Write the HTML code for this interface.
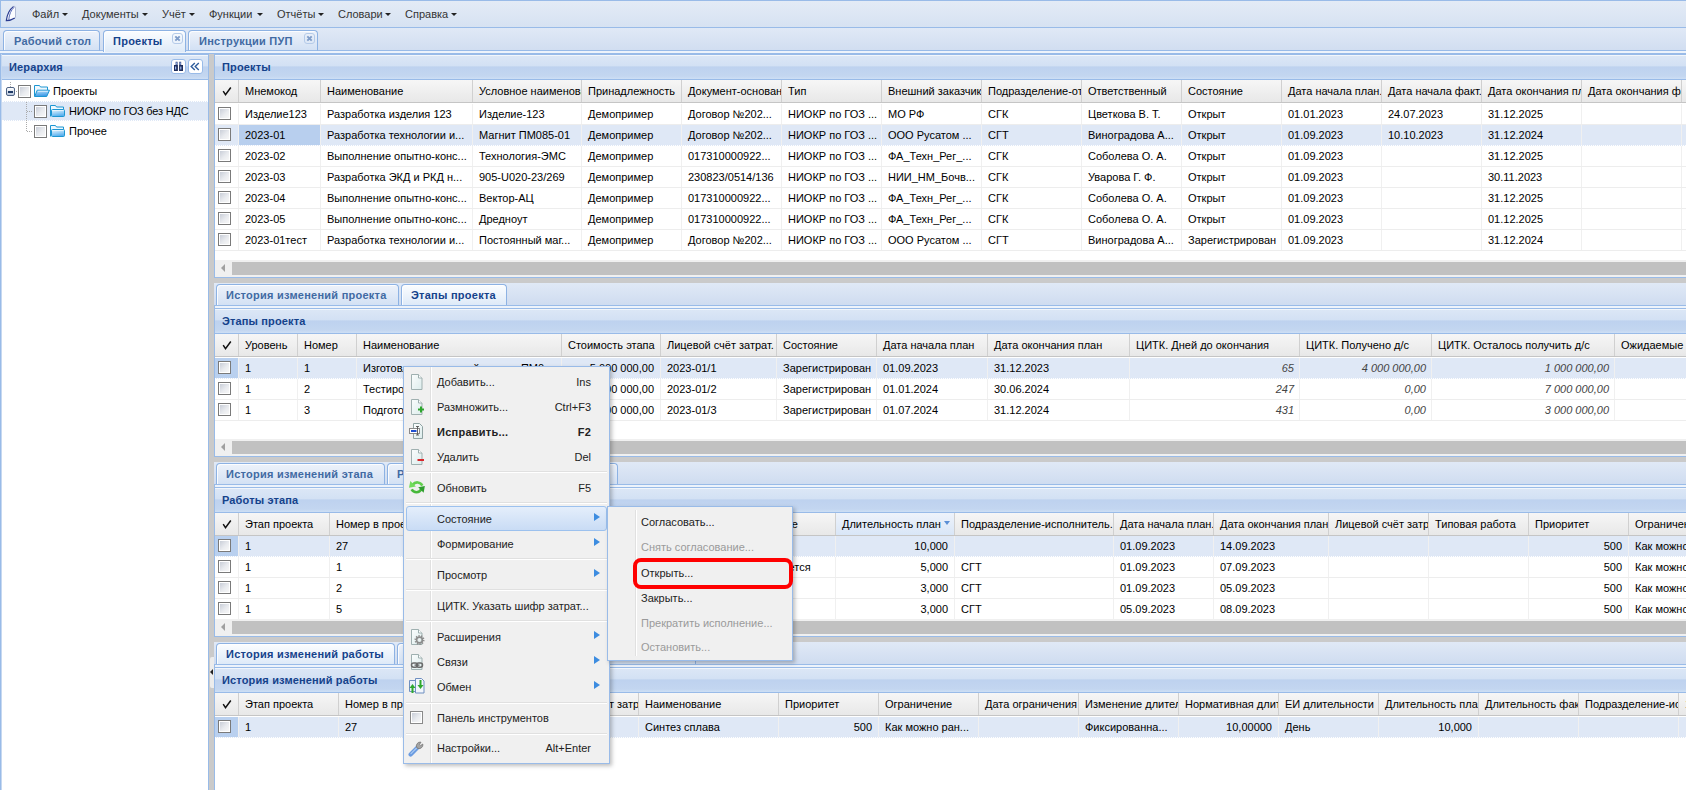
<!DOCTYPE html><html><head><meta charset="utf-8"><title>UI</title><style>
*{box-sizing:border-box;margin:0;padding:0}
html,body{width:1686px;height:790px;overflow:hidden;background:#cacaca;font-family:"Liberation Sans",sans-serif;font-size:11px;color:#000}
.abs{position:absolute}
.t{position:absolute;white-space:nowrap;line-height:13px}
.menubar{left:0;top:0;width:1686px;height:28px;border-top:1px solid #99bbe8;border-bottom:1px solid #99bbe8;background:linear-gradient(#e3ebf6,#d6e2f2)}
.mi{position:absolute;top:8px;color:#333;white-space:nowrap;line-height:13px}
.arr{position:absolute;width:0;height:0;border-left:3px solid transparent;border-right:3px solid transparent;border-top:3px solid #222}
.tabstrip{background:linear-gradient(#e0e9f6,#cfdcf0)}
.tab{position:absolute;border:1px solid #8db2e3;border-bottom:none;border-radius:4px 4px 0 0;box-shadow:inset 1px 1px 0 rgba(255,255,255,.85);background:linear-gradient(#edf2fa,#d3e1f4);font-weight:bold;color:#416aa3;white-space:nowrap;line-height:13px}
.tab.act{background:linear-gradient(#fbfdff,#deeaf8);color:#15428b}
.ph{position:absolute;border:1px solid #99bbe8;box-shadow:inset 0 1px 0 #f2f6fb;background:linear-gradient(#dce7f6 0,#d3e1f4 44%,#c9daf1 46%,#bed2ef 52%,#c3d6f0 88%,#cddff5 100%);color:#15428b;font-weight:bold}
.gh{position:absolute;background:linear-gradient(#f6f6f6,#e8e8e8);border-bottom:1px solid #c5c5c5}
.hc{position:absolute;top:0;height:22px;border-right:1px solid #d0d0d0;overflow:hidden;white-space:nowrap;padding-left:6px;line-height:22px;color:#000}
.row{position:absolute;height:21px;border-bottom:1px solid #ededed;background:#fff}
.row.sel{background:#dfe8f6;border-bottom:1px dotted #fff}
.c{position:absolute;top:0;height:20px;border-right:1px solid #f0f0f0;overflow:hidden;white-space:nowrap;padding-left:6px;line-height:20px}
.c.r{text-align:right;padding-left:0;padding-right:6px}
.c.i{font-style:italic;color:#444;padding-right:5px}
.cb{position:absolute;width:13px;height:13px;border:1px solid #7a7a7a;background:#fff}
.cb:after{content:"";position:absolute;left:1px;top:1px;right:1px;bottom:1px;background:linear-gradient(135deg,#c9ced8,#e9ebef 55%,#f7f7f7)}
.sb{position:absolute;height:17px;background:#f0f0f0}
.thumb{position:absolute;top:2px;height:13px;background:#c1c1c1}
.menu{position:absolute;background:#f0f0f0;border:1px solid #99bbe8;box-shadow:2px 2px 4px rgba(0,0,0,.25)}
.mline{position:absolute;width:1px;background:#e2e2e2;border-right:1px solid #fff}
.msep{position:absolute;height:2px;border-top:1px solid #e0e0e0;border-bottom:1px solid #fff}
.mt{position:absolute;white-space:nowrap;line-height:13px;color:#222}
.mt.dis{color:#9a9a9a}
.sub{position:absolute;width:0;height:0;border-top:4.5px solid transparent;border-bottom:4.5px solid transparent;border-left:6.5px solid #3d8ce0}
</style></head><body>
<div class="abs menubar"></div>
<div class="abs" style="left:0;top:0;width:1px;height:54px;background:#99bbe8"></div>
<div class="abs" style="left:0;top:28px;width:1686px;height:1px;background:#b3cbea"></div>
<svg class="abs" style="left:0;top:0" width="24" height="26" viewBox="0 0 24 26"><path d="M6.3 20.6 C7 15 9.5 9.5 13.6 6.4 Q15.3 6 15.5 7.2 L15.5 17.2 C14 19 10 20.6 6.3 20.6Z" fill="#fbfcff" stroke="none"/><path d="M13.6 6.4 C9.5 9.5 7 15 6.3 20.6 C10 20.6 12.5 19.6 14.8 18" fill="none" stroke="#2a3b90" stroke-width="1.15"/><path d="M13.6 6.4 Q15.3 6 15.5 7.2 L15.5 17.2 L14.8 18" fill="none" stroke="#a9b3cf" stroke-width="0.9"/><path d="M8.8 19.6 C9.2 14.5 11 10 14.2 7.2" fill="none" stroke="#4a5fb0" stroke-width="0.9"/></svg>
<div class="mi" style="left:32px">Файл</div><div class="arr" style="left:62px;top:13px"></div>
<div class="mi" style="left:82px">Документы</div><div class="arr" style="left:142px;top:13px"></div>
<div class="mi" style="left:162px">Учёт</div><div class="arr" style="left:189px;top:13px"></div>
<div class="mi" style="left:209px">Функции</div><div class="arr" style="left:257px;top:13px"></div>
<div class="mi" style="left:277px">Отчёты</div><div class="arr" style="left:318px;top:13px"></div>
<div class="mi" style="left:338px">Словари</div><div class="arr" style="left:385px;top:13px"></div>
<div class="mi" style="left:405px">Справка</div><div class="arr" style="left:451px;top:13px"></div>
<div class="abs tabstrip" style="left:0;top:28px;width:1686px;height:26px;border-bottom:1px solid #99bbe8"></div>
<div class="abs" style="left:0;top:50px;width:1686px;height:1px;background:#99bbe8"></div>
<div class="abs" style="left:0;top:51px;width:1686px;height:2px;background:#edf3fb"></div>
<div class="tab" style="left:3px;top:30px;width:97px;height:21px;padding:4px 0 0 10px;border-bottom:1px solid #99bbe8;letter-spacing:0.25px">Рабочий стол</div>
<div class="tab act" style="left:103px;top:30px;width:83px;height:22px;padding:4px 0 0 9px;letter-spacing:0.25px">Проекты</div><div class="abs" style="left:172px;top:33px;width:11px;height:11px;border-radius:3px;border:1px solid #b5cbe9;background:transparent"><svg width="9" height="9" style="position:absolute;left:0;top:0"><path d="M2.3 2.3L6.7 6.7M6.7 2.3L2.3 6.7" stroke="#7f9dc9" stroke-width="1.9"/></svg></div>
<div class="tab" style="left:188px;top:30px;width:130px;height:21px;padding:4px 0 0 10px;border-bottom:1px solid #99bbe8;letter-spacing:0.25px">Инструкции ПУП</div><div class="abs" style="left:304px;top:33px;width:11px;height:11px;border-radius:3px;border:1px solid #b5cbe9;background:transparent"><svg width="9" height="9" style="position:absolute;left:0;top:0"><path d="M2.3 2.3L6.7 6.7M6.7 2.3L2.3 6.7" stroke="#7f9dc9" stroke-width="1.9"/></svg></div>
<div class="abs" style="left:0;top:54px;width:209px;height:760px;background:#fff;border:1px solid #99bbe8;border-top:none"></div>
<div class="ph" style="left:0;top:53px;width:209px;height:27px;border-top-width:2px"><div class="t" style="left:8px;top:6px;letter-spacing:0.15px">Иерархия</div></div>
<div class="abs" style="left:171px;top:59px;width:15px;height:15px;border:1px solid #99bbe8;border-radius:3px;background:#fff"><svg width="13" height="13" style="position:absolute;left:0;top:0"><path d="M3.6 1.8h2v3.2h-2z M7.2 1.8h2v3.2h-2z" fill="#3b4f86"/><path d="M2 5h3.9v6h-3.9z M7.1 5h3.9v6h-3.9z" fill="#1f2d5a"/><path d="M3 6.5h1.2v3h-1.2z M8.2 6.5h1.2v3h-1.2z M4 2.5h0.8v2h-0.8z M7.8 2.5h0.8v2h-0.8z" fill="#9db8f0"/></svg></div>
<div class="abs" style="left:188px;top:59px;width:15px;height:15px;border:1px solid #99bbe8;border-radius:3px;background:#fff"><svg width="13" height="13" style="position:absolute;left:0;top:0"><path d="M5.8 3L2.2 6.5L5.8 10M9.8 3L6.2 6.5L9.8 10" fill="none" stroke="#2f5d9c" stroke-width="1.4"/></svg></div>
<div class="abs" style="left:2px;top:101px;width:206px;height:20px;background:#dfe8f6;border-top:1px dotted #fff;border-bottom:1px dotted #fff"></div>
<svg width="0" height="0" style="position:absolute"><defs><linearGradient id="fg" x1="0" y1="0" x2="0.3" y2="1"><stop offset="0" stop-color="#eef8ff"/><stop offset="1" stop-color="#58b0ee"/></linearGradient><linearGradient id="fg2" x1="0" y1="0" x2="0.2" y2="1"><stop offset="0" stop-color="#bfe4fb"/><stop offset="1" stop-color="#3b98e6"/></linearGradient></defs></svg>
<svg class="abs" style="left:0;top:81px" width="40" height="60"><path d="M10.5 1V6" stroke="#aaa" stroke-dasharray="1 1"/><path d="M26.5 21V51 M27 30.5H33 M27 50.5H33 M16 10.5H18" stroke="#aaa" stroke-dasharray="1 1"/></svg>
<div class="abs" style="left:6px;top:87px;width:9px;height:9px;border:1px solid #4f6384;border-radius:2px;background:linear-gradient(#fff,#b9c7dc)"><div class="abs" style="left:1px;top:3px;width:5px;height:1.5px;background:#1e3a66"></div></div>
<div class="cb" style="left:18px;top:85px"></div><svg class="abs" style="left:34px;top:85px" width="16" height="12" viewBox="0 0 16 12"><path d="M0.5 11.5V0.5H5.5L6.5 2H13.5V5" fill="#eef8fe" stroke="#1d96d2"/><path d="M0.7 11.5L3.2 5.2H15.5L12.7 11.5Z" fill="url(#fg2)" stroke="#1d96d2"/><path d="M3.8 6.3H14" stroke="#e8f6ff" stroke-width="0.8"/></svg><div class="t" style="left:53px;top:85px">Проекты</div>
<div class="cb" style="left:34px;top:105px"></div><svg class="abs" style="left:50px;top:105px" width="16" height="12" viewBox="0 0 16 12"><path d="M0.5 11.5V0.5H5.5L6.5 2H13.5V4.5" fill="#eef8fe" stroke="#1d96d2"/><rect x="1.5" y="4.5" width="13" height="7" rx="1" fill="url(#fg)" stroke="#1d96d2"/><path d="M2.5 5.6H13.5" stroke="#fff" stroke-width="0.8" opacity="0.8"/></svg><div class="t" style="left:69px;top:105px;letter-spacing:-0.2px">НИОКР по ГОЗ без НДС</div>
<div class="cb" style="left:34px;top:125px"></div><svg class="abs" style="left:50px;top:125px" width="16" height="12" viewBox="0 0 16 12"><path d="M0.5 11.5V0.5H5.5L6.5 2H13.5V4.5" fill="#eef8fe" stroke="#1d96d2"/><rect x="1.5" y="4.5" width="13" height="7" rx="1" fill="url(#fg)" stroke="#1d96d2"/><path d="M2.5 5.6H13.5" stroke="#fff" stroke-width="0.8" opacity="0.8"/></svg><div class="t" style="left:69px;top:125px">Прочее</div>
<div class="abs" style="left:214px;top:53px;width:1472px;height:225px;background:#fff;border-left:1px solid #99bbe8;border-bottom:1px solid #99bbe8"></div>
<div class="ph" style="left:214px;top:53px;width:1474px;height:27px;border-top-width:2px"><div class="t" style="left:7px;top:6px;letter-spacing:0.15px">Проекты</div></div>
<div class="gh" style="left:215px;top:80px;width:1471px;height:23px">
<div class="hc" style="left:0px;width:24px;padding-left:0"><svg width="24" height="22" style="position:absolute;left:0;top:0"><path d="M8.2 11.2L10.5 14.6L15.8 7.5" fill="none" stroke="#111" stroke-width="1.5"/></svg></div>
<div class="hc" style="left:24px;width:82px">Мнемокод</div>
<div class="hc" style="left:106px;width:152px">Наименование</div>
<div class="hc" style="left:258px;width:109px">Условное наименование</div>
<div class="hc" style="left:367px;width:100px">Принадлежность</div>
<div class="hc" style="left:467px;width:100px">Документ-основание</div>
<div class="hc" style="left:567px;width:100px">Тип</div>
<div class="hc" style="left:667px;width:100px">Внешний заказчик</div>
<div class="hc" style="left:767px;width:100px">Подразделение-ответственный</div>
<div class="hc" style="left:867px;width:100px">Ответственный</div>
<div class="hc" style="left:967px;width:100px">Состояние</div>
<div class="hc" style="left:1067px;width:100px">Дата начала план.</div>
<div class="hc" style="left:1167px;width:100px">Дата начала факт.</div>
<div class="hc" style="left:1267px;width:100px">Дата окончания план</div>
<div class="hc" style="left:1367px;width:100px">Дата окончания факт</div>
<div class="hc" style="left:1467px;width:119px"></div>
</div>
<div class="row" style="left:215px;top:104px;width:1471px">
<div class="c" style="left:0;width:24px"></div>
<div class="cb" style="left:3px;top:3px"></div>
<div class="c" style="left:24px;width:82px">Изделие123</div>
<div class="c" style="left:106px;width:152px">Разработка изделия 123</div>
<div class="c" style="left:258px;width:109px">Изделие-123</div>
<div class="c" style="left:367px;width:100px">Демопример</div>
<div class="c" style="left:467px;width:100px">Договор №202...</div>
<div class="c" style="left:567px;width:100px">НИОКР по ГОЗ ...</div>
<div class="c" style="left:667px;width:100px">МО РФ</div>
<div class="c" style="left:767px;width:100px">СГК</div>
<div class="c" style="left:867px;width:100px">Цветкова В. Т.</div>
<div class="c" style="left:967px;width:100px">Открыт</div>
<div class="c" style="left:1067px;width:100px">01.01.2023</div>
<div class="c" style="left:1167px;width:100px">24.07.2023</div>
<div class="c" style="left:1267px;width:100px">31.12.2025</div>
<div class="c" style="left:1367px;width:100px"></div>
<div class="c" style="left:1467px;width:119px"></div>
</div>
<div class="row sel" style="left:215px;top:125px;width:1471px">
<div class="c" style="left:0;width:24px"></div>
<div class="cb" style="left:3px;top:3px"></div>
<div class="c" style="left:24px;width:82px;background:#b8cfee">2023-01</div>
<div class="c" style="left:106px;width:152px">Разработка технологии и...</div>
<div class="c" style="left:258px;width:109px">Магнит ПМ085-01</div>
<div class="c" style="left:367px;width:100px">Демопример</div>
<div class="c" style="left:467px;width:100px">Договор №202...</div>
<div class="c" style="left:567px;width:100px">НИОКР по ГОЗ ...</div>
<div class="c" style="left:667px;width:100px">ООО Русатом ...</div>
<div class="c" style="left:767px;width:100px">СГТ</div>
<div class="c" style="left:867px;width:100px">Виноградова А...</div>
<div class="c" style="left:967px;width:100px">Открыт</div>
<div class="c" style="left:1067px;width:100px">01.09.2023</div>
<div class="c" style="left:1167px;width:100px">10.10.2023</div>
<div class="c" style="left:1267px;width:100px">31.12.2024</div>
<div class="c" style="left:1367px;width:100px"></div>
<div class="c" style="left:1467px;width:119px"></div>
</div>
<div class="row" style="left:215px;top:146px;width:1471px">
<div class="c" style="left:0;width:24px"></div>
<div class="cb" style="left:3px;top:3px"></div>
<div class="c" style="left:24px;width:82px">2023-02</div>
<div class="c" style="left:106px;width:152px">Выполнение опытно-конс...</div>
<div class="c" style="left:258px;width:109px">Технология-ЭМС</div>
<div class="c" style="left:367px;width:100px">Демопример</div>
<div class="c" style="left:467px;width:100px">017310000922...</div>
<div class="c" style="left:567px;width:100px">НИОКР по ГОЗ ...</div>
<div class="c" style="left:667px;width:100px">ФА_Техн_Рег_...</div>
<div class="c" style="left:767px;width:100px">СГК</div>
<div class="c" style="left:867px;width:100px">Соболева О. А.</div>
<div class="c" style="left:967px;width:100px">Открыт</div>
<div class="c" style="left:1067px;width:100px">01.09.2023</div>
<div class="c" style="left:1167px;width:100px"></div>
<div class="c" style="left:1267px;width:100px">31.12.2025</div>
<div class="c" style="left:1367px;width:100px"></div>
<div class="c" style="left:1467px;width:119px"></div>
</div>
<div class="row" style="left:215px;top:167px;width:1471px">
<div class="c" style="left:0;width:24px"></div>
<div class="cb" style="left:3px;top:3px"></div>
<div class="c" style="left:24px;width:82px">2023-03</div>
<div class="c" style="left:106px;width:152px">Разработка ЭКД и РКД н...</div>
<div class="c" style="left:258px;width:109px">905-U020-23/269</div>
<div class="c" style="left:367px;width:100px">Демопример</div>
<div class="c" style="left:467px;width:100px">230823/0514/136</div>
<div class="c" style="left:567px;width:100px">НИОКР по ГОЗ ...</div>
<div class="c" style="left:667px;width:100px">НИИ_НМ_Бочв...</div>
<div class="c" style="left:767px;width:100px">СГК</div>
<div class="c" style="left:867px;width:100px">Уварова Г. Ф.</div>
<div class="c" style="left:967px;width:100px">Открыт</div>
<div class="c" style="left:1067px;width:100px">01.09.2023</div>
<div class="c" style="left:1167px;width:100px"></div>
<div class="c" style="left:1267px;width:100px">30.11.2023</div>
<div class="c" style="left:1367px;width:100px"></div>
<div class="c" style="left:1467px;width:119px"></div>
</div>
<div class="row" style="left:215px;top:188px;width:1471px">
<div class="c" style="left:0;width:24px"></div>
<div class="cb" style="left:3px;top:3px"></div>
<div class="c" style="left:24px;width:82px">2023-04</div>
<div class="c" style="left:106px;width:152px">Выполнение опытно-конс...</div>
<div class="c" style="left:258px;width:109px">Вектор-АЦ</div>
<div class="c" style="left:367px;width:100px">Демопример</div>
<div class="c" style="left:467px;width:100px">017310000922...</div>
<div class="c" style="left:567px;width:100px">НИОКР по ГОЗ ...</div>
<div class="c" style="left:667px;width:100px">ФА_Техн_Рег_...</div>
<div class="c" style="left:767px;width:100px">СГК</div>
<div class="c" style="left:867px;width:100px">Соболева О. А.</div>
<div class="c" style="left:967px;width:100px">Открыт</div>
<div class="c" style="left:1067px;width:100px">01.09.2023</div>
<div class="c" style="left:1167px;width:100px"></div>
<div class="c" style="left:1267px;width:100px">31.12.2025</div>
<div class="c" style="left:1367px;width:100px"></div>
<div class="c" style="left:1467px;width:119px"></div>
</div>
<div class="row" style="left:215px;top:209px;width:1471px">
<div class="c" style="left:0;width:24px"></div>
<div class="cb" style="left:3px;top:3px"></div>
<div class="c" style="left:24px;width:82px">2023-05</div>
<div class="c" style="left:106px;width:152px">Выполнение опытно-конс...</div>
<div class="c" style="left:258px;width:109px">Дредноут</div>
<div class="c" style="left:367px;width:100px">Демопример</div>
<div class="c" style="left:467px;width:100px">017310000922...</div>
<div class="c" style="left:567px;width:100px">НИОКР по ГОЗ ...</div>
<div class="c" style="left:667px;width:100px">ФА_Техн_Рег_...</div>
<div class="c" style="left:767px;width:100px">СГК</div>
<div class="c" style="left:867px;width:100px">Соболева О. А.</div>
<div class="c" style="left:967px;width:100px">Открыт</div>
<div class="c" style="left:1067px;width:100px">01.09.2023</div>
<div class="c" style="left:1167px;width:100px"></div>
<div class="c" style="left:1267px;width:100px">01.12.2025</div>
<div class="c" style="left:1367px;width:100px"></div>
<div class="c" style="left:1467px;width:119px"></div>
</div>
<div class="row" style="left:215px;top:230px;width:1471px">
<div class="c" style="left:0;width:24px"></div>
<div class="cb" style="left:3px;top:3px"></div>
<div class="c" style="left:24px;width:82px">2023-01тест</div>
<div class="c" style="left:106px;width:152px">Разработка технологии и...</div>
<div class="c" style="left:258px;width:109px">Постоянный маг...</div>
<div class="c" style="left:367px;width:100px">Демопример</div>
<div class="c" style="left:467px;width:100px">Договор №202...</div>
<div class="c" style="left:567px;width:100px">НИОКР по ГОЗ ...</div>
<div class="c" style="left:667px;width:100px">ООО Русатом ...</div>
<div class="c" style="left:767px;width:100px">СГТ</div>
<div class="c" style="left:867px;width:100px">Виноградова А...</div>
<div class="c" style="left:967px;width:100px">Зарегистрирован</div>
<div class="c" style="left:1067px;width:100px">01.09.2023</div>
<div class="c" style="left:1167px;width:100px"></div>
<div class="c" style="left:1267px;width:100px">31.12.2024</div>
<div class="c" style="left:1367px;width:100px"></div>
<div class="c" style="left:1467px;width:119px"></div>
</div>
<div class="sb" style="left:215px;top:260px;width:1471px"><div class="abs" style="left:6px;top:4px;width:0;height:0;border-top:4px solid transparent;border-bottom:4px solid transparent;border-right:4px solid #a0a0a0"></div><div class="thumb" style="left:17px;width:1454px"></div></div>
<div class="abs tabstrip" style="left:214px;top:283px;width:1472px;height:22px"></div>
<div class="abs" style="left:214px;top:305px;width:1472px;height:1px;background:#99bbe8"></div>
<div class="abs" style="left:214px;top:306px;width:1472px;height:2px;background:#edf3fb;border-left:1px solid #99bbe8"></div>
<div class="tab" style="left:216px;top:284px;width:183px;height:21px;padding:4px 0 0 9px;letter-spacing:0.25px">История изменений проекта</div>
<div class="tab act" style="left:401px;top:284px;width:106px;height:21px;padding:4px 0 0 9px;letter-spacing:0.25px">Этапы проекта</div>
<div class="abs" style="left:214px;top:308px;width:1472px;height:149px;background:#fff;border-left:1px solid #99bbe8;border-bottom:1px solid #99bbe8"></div>
<div class="ph" style="left:214px;top:308px;width:1474px;height:26px;border-top-width:1px"><div class="t" style="left:7px;top:6px;letter-spacing:0.15px">Этапы проекта</div></div>
<div class="gh" style="left:215px;top:334px;width:1471px;height:23px">
<div class="hc" style="left:0px;width:24px;padding-left:0"><svg width="24" height="22" style="position:absolute;left:0;top:0"><path d="M8.2 11.2L10.5 14.6L15.8 7.5" fill="none" stroke="#111" stroke-width="1.5"/></svg></div>
<div class="hc" style="left:24px;width:59px">Уровень</div>
<div class="hc" style="left:83px;width:59px">Номер</div>
<div class="hc" style="left:142px;width:205px">Наименование</div>
<div class="hc" style="left:347px;width:99px">Стоимость этапа</div>
<div class="hc" style="left:446px;width:116px">Лицевой счёт затрат.</div>
<div class="hc" style="left:562px;width:100px">Состояние</div>
<div class="hc" style="left:662px;width:111px">Дата начала план</div>
<div class="hc" style="left:773px;width:142px">Дата окончания план</div>
<div class="hc" style="left:915px;width:170px">ЦИТК. Дней до окончания</div>
<div class="hc" style="left:1085px;width:132px">ЦИТК. Получено д/с</div>
<div class="hc" style="left:1217px;width:183px">ЦИТК. Осталось получить д/с</div>
<div class="hc" style="left:1400px;width:186px">Ожидаемые расходы</div>
</div>
<div class="row sel" style="left:215px;top:358px;width:1471px">
<div class="c" style="left:0;width:24px;background:#b9d0ef"></div>
<div class="cb" style="left:3px;top:3px"></div>
<div class="c" style="left:24px;width:59px">1</div>
<div class="c" style="left:83px;width:59px">1</div>
<div class="c" style="left:142px;width:205px">Изготовление опытной партии ПМ0...</div>
<div class="c r" style="left:347px;width:99px">5 000 000,00</div>
<div class="c" style="left:446px;width:116px">2023-01/1</div>
<div class="c" style="left:562px;width:100px">Зарегистрирован</div>
<div class="c" style="left:662px;width:111px">01.09.2023</div>
<div class="c" style="left:773px;width:142px">31.12.2023</div>
<div class="c r i" style="left:915px;width:170px">65</div>
<div class="c r i" style="left:1085px;width:132px">4 000 000,00</div>
<div class="c r i" style="left:1217px;width:183px">1 000 000,00</div>
<div class="c" style="left:1400px;width:186px"></div>
</div>
<div class="row" style="left:215px;top:379px;width:1471px">
<div class="c" style="left:0;width:24px"></div>
<div class="cb" style="left:3px;top:3px"></div>
<div class="c" style="left:24px;width:59px">1</div>
<div class="c" style="left:83px;width:59px">2</div>
<div class="c" style="left:142px;width:205px">Тестирование опытной партии</div>
<div class="c r" style="left:347px;width:99px">7 000 000,00</div>
<div class="c" style="left:446px;width:116px">2023-01/2</div>
<div class="c" style="left:562px;width:100px">Зарегистрирован</div>
<div class="c" style="left:662px;width:111px">01.01.2024</div>
<div class="c" style="left:773px;width:142px">30.06.2024</div>
<div class="c r i" style="left:915px;width:170px">247</div>
<div class="c r i" style="left:1085px;width:132px">0,00</div>
<div class="c r i" style="left:1217px;width:183px">7 000 000,00</div>
<div class="c" style="left:1400px;width:186px"></div>
</div>
<div class="row" style="left:215px;top:400px;width:1471px">
<div class="c" style="left:0;width:24px"></div>
<div class="cb" style="left:3px;top:3px"></div>
<div class="c" style="left:24px;width:59px">1</div>
<div class="c" style="left:83px;width:59px">3</div>
<div class="c" style="left:142px;width:205px">Подготовка документации</div>
<div class="c r" style="left:347px;width:99px">3 000 000,00</div>
<div class="c" style="left:446px;width:116px">2023-01/3</div>
<div class="c" style="left:562px;width:100px">Зарегистрирован</div>
<div class="c" style="left:662px;width:111px">01.07.2024</div>
<div class="c" style="left:773px;width:142px">31.12.2024</div>
<div class="c r i" style="left:915px;width:170px">431</div>
<div class="c r i" style="left:1085px;width:132px">0,00</div>
<div class="c r i" style="left:1217px;width:183px">3 000 000,00</div>
<div class="c" style="left:1400px;width:186px"></div>
</div>
<div class="sb" style="left:215px;top:439px;width:1471px"><div class="abs" style="left:6px;top:4px;width:0;height:0;border-top:4px solid transparent;border-bottom:4px solid transparent;border-right:4px solid #a0a0a0"></div><div class="thumb" style="left:17px;width:1454px"></div></div>
<div class="abs tabstrip" style="left:214px;top:462px;width:1472px;height:22px"></div>
<div class="abs" style="left:214px;top:484px;width:1472px;height:1px;background:#99bbe8"></div>
<div class="abs" style="left:214px;top:485px;width:1472px;height:2px;background:#edf3fb;border-left:1px solid #99bbe8"></div>
<div class="tab" style="left:216px;top:463px;width:169px;height:21px;padding:4px 0 0 9px;letter-spacing:0.25px">История изменений этапа</div>
<div class="tab" style="left:387px;top:463px;width:231px;height:21px;padding:4px 0 0 9px;letter-spacing:0.25px">Работы этапа</div>
<div class="abs" style="left:214px;top:487px;width:1472px;height:150px;background:#fff;border-left:1px solid #99bbe8;border-bottom:1px solid #99bbe8"></div>
<div class="ph" style="left:214px;top:487px;width:1474px;height:26px;border-top-width:1px"><div class="t" style="left:7px;top:6px;letter-spacing:0.15px">Работы этапа</div></div>
<div class="gh" style="left:215px;top:513px;width:1471px;height:23px">
<div class="hc" style="left:0px;width:24px;padding-left:0"><svg width="24" height="22" style="position:absolute;left:0;top:0"><path d="M8.2 11.2L10.5 14.6L15.8 7.5" fill="none" stroke="#111" stroke-width="1.5"/></svg></div>
<div class="hc" style="left:24px;width:91px">Этап проекта</div>
<div class="hc" style="left:115px;width:107px">Номер в проекте</div>
<div class="hc" style="left:222px;width:100px">Шифр</div>
<div class="hc" style="left:322px;width:200px">Наименование</div>
<div class="hc" style="left:522px;width:99px">Состояние</div>
<div class="hc" style="left:621px;width:119px;background:linear-gradient(#eef3fb,#d9e6f7)">Длительность план<div style="position:absolute;left:108px;top:8px;width:0;height:0;border-left:3.5px solid transparent;border-right:3.5px solid transparent;border-top:4px solid #5b8fd6"></div></div>
<div class="hc" style="left:740px;width:159px">Подразделение-исполнитель...</div>
<div class="hc" style="left:899px;width:100px">Дата начала план.</div>
<div class="hc" style="left:999px;width:115px">Дата окончания план</div>
<div class="hc" style="left:1114px;width:100px">Лицевой счёт затрат</div>
<div class="hc" style="left:1214px;width:100px">Типовая работа</div>
<div class="hc" style="left:1314px;width:100px">Приоритет</div>
<div class="hc" style="left:1414px;width:172px">Ограничение</div>
</div>
<div class="row sel" style="left:215px;top:536px;width:1471px">
<div class="c" style="left:0;width:24px;background:#b9d0ef"></div>
<div class="cb" style="left:3px;top:3px"></div>
<div class="c" style="left:24px;width:91px">1</div>
<div class="c" style="left:115px;width:107px">27</div>
<div class="c" style="left:222px;width:100px"></div>
<div class="c" style="left:322px;width:200px">Синтез сплава</div>
<div class="c" style="left:522px;width:99px"></div>
<div class="c r" style="left:621px;width:119px">10,000</div>
<div class="c" style="left:740px;width:159px"></div>
<div class="c" style="left:899px;width:100px">01.09.2023</div>
<div class="c" style="left:999px;width:115px">14.09.2023</div>
<div class="c" style="left:1114px;width:100px"></div>
<div class="c" style="left:1214px;width:100px"></div>
<div class="c r" style="left:1314px;width:100px">500</div>
<div class="c" style="left:1414px;width:172px">Как можно раньше</div>
</div>
<div class="row" style="left:215px;top:557px;width:1471px">
<div class="c" style="left:0;width:24px"></div>
<div class="cb" style="left:3px;top:3px"></div>
<div class="c" style="left:24px;width:91px">1</div>
<div class="c" style="left:115px;width:107px">1</div>
<div class="c" style="left:222px;width:100px"></div>
<div class="c" style="left:322px;width:200px"></div>
<div class="c" style="left:522px;width:99px">Выполняется</div>
<div class="c r" style="left:621px;width:119px">5,000</div>
<div class="c" style="left:740px;width:159px">СГТ</div>
<div class="c" style="left:899px;width:100px">01.09.2023</div>
<div class="c" style="left:999px;width:115px">07.09.2023</div>
<div class="c" style="left:1114px;width:100px"></div>
<div class="c" style="left:1214px;width:100px"></div>
<div class="c r" style="left:1314px;width:100px">500</div>
<div class="c" style="left:1414px;width:172px">Как можно раньше</div>
</div>
<div class="row" style="left:215px;top:578px;width:1471px">
<div class="c" style="left:0;width:24px"></div>
<div class="cb" style="left:3px;top:3px"></div>
<div class="c" style="left:24px;width:91px">1</div>
<div class="c" style="left:115px;width:107px">2</div>
<div class="c" style="left:222px;width:100px"></div>
<div class="c" style="left:322px;width:200px"></div>
<div class="c" style="left:522px;width:99px"></div>
<div class="c r" style="left:621px;width:119px">3,000</div>
<div class="c" style="left:740px;width:159px">СГТ</div>
<div class="c" style="left:899px;width:100px">01.09.2023</div>
<div class="c" style="left:999px;width:115px">05.09.2023</div>
<div class="c" style="left:1114px;width:100px"></div>
<div class="c" style="left:1214px;width:100px"></div>
<div class="c r" style="left:1314px;width:100px">500</div>
<div class="c" style="left:1414px;width:172px">Как можно раньше</div>
</div>
<div class="row" style="left:215px;top:599px;width:1471px">
<div class="c" style="left:0;width:24px"></div>
<div class="cb" style="left:3px;top:3px"></div>
<div class="c" style="left:24px;width:91px">1</div>
<div class="c" style="left:115px;width:107px">5</div>
<div class="c" style="left:222px;width:100px"></div>
<div class="c" style="left:322px;width:200px"></div>
<div class="c" style="left:522px;width:99px"></div>
<div class="c r" style="left:621px;width:119px">3,000</div>
<div class="c" style="left:740px;width:159px">СГТ</div>
<div class="c" style="left:899px;width:100px">05.09.2023</div>
<div class="c" style="left:999px;width:115px">08.09.2023</div>
<div class="c" style="left:1114px;width:100px"></div>
<div class="c" style="left:1214px;width:100px"></div>
<div class="c r" style="left:1314px;width:100px">500</div>
<div class="c" style="left:1414px;width:172px">Как можно раньше</div>
</div>
<div class="sb" style="left:215px;top:619px;width:1471px"><div class="abs" style="left:6px;top:4px;width:0;height:0;border-top:4px solid transparent;border-bottom:4px solid transparent;border-right:4px solid #a0a0a0"></div><div class="thumb" style="left:17px;width:1454px"></div></div>
<div class="abs tabstrip" style="left:214px;top:642px;width:1472px;height:22px"></div>
<div class="abs" style="left:214px;top:664px;width:1472px;height:1px;background:#99bbe8"></div>
<div class="abs" style="left:214px;top:665px;width:1472px;height:2px;background:#edf3fb;border-left:1px solid #99bbe8"></div>
<div class="tab act" style="left:216px;top:643px;width:179px;height:21px;padding:4px 0 0 9px;letter-spacing:0.25px">История изменений работы</div>
<div class="tab" style="left:397px;top:643px;width:299px;height:21px;padding:4px 0 0 9px;letter-spacing:0.25px">Связи работы</div>
<div class="abs" style="left:214px;top:667px;width:1472px;height:134px;background:#fff;border-left:1px solid #99bbe8;border-bottom:1px solid #99bbe8"></div>
<div class="ph" style="left:214px;top:667px;width:1474px;height:26px;border-top-width:1px"><div class="t" style="left:7px;top:6px;letter-spacing:0.15px">История изменений работы</div></div>
<div class="gh" style="left:215px;top:693px;width:1471px;height:23px">
<div class="hc" style="left:0px;width:24px;padding-left:0"><svg width="24" height="22" style="position:absolute;left:0;top:0"><path d="M8.2 11.2L10.5 14.6L15.8 7.5" fill="none" stroke="#111" stroke-width="1.5"/></svg></div>
<div class="hc" style="left:24px;width:100px">Этап проекта</div>
<div class="hc" style="left:124px;width:100px">Номер в проекте</div>
<div class="hc" style="left:224px;width:100px">Шифр</div>
<div class="hc" style="left:324px;width:100px">Лицевой счёт затрат</div>
<div class="hc" style="left:424px;width:140px">Наименование</div>
<div class="hc" style="left:564px;width:100px">Приоритет</div>
<div class="hc" style="left:664px;width:100px">Ограничение</div>
<div class="hc" style="left:764px;width:100px">Дата ограничения</div>
<div class="hc" style="left:864px;width:100px">Изменение длительности</div>
<div class="hc" style="left:964px;width:100px">Нормативная длительность</div>
<div class="hc" style="left:1064px;width:100px">ЕИ длительности</div>
<div class="hc" style="left:1164px;width:100px">Длительность план</div>
<div class="hc" style="left:1264px;width:100px">Длительность факт</div>
<div class="hc" style="left:1364px;width:100px">Подразделение-исполнитель</div>
<div class="hc" style="left:1464px;width:122px">1</div>
</div>
<div class="row sel" style="left:215px;top:717px;width:1471px">
<div class="c" style="left:0;width:24px;background:#b9d0ef"></div>
<div class="cb" style="left:3px;top:3px"></div>
<div class="c" style="left:24px;width:100px">1</div>
<div class="c" style="left:124px;width:100px">27</div>
<div class="c" style="left:224px;width:100px"></div>
<div class="c" style="left:324px;width:100px"></div>
<div class="c" style="left:424px;width:140px">Синтез сплава</div>
<div class="c r" style="left:564px;width:100px">500</div>
<div class="c" style="left:664px;width:100px">Как можно ран...</div>
<div class="c" style="left:764px;width:100px"></div>
<div class="c" style="left:864px;width:100px">Фиксированна...</div>
<div class="c r" style="left:964px;width:100px">10,00000</div>
<div class="c" style="left:1064px;width:100px">День</div>
<div class="c r" style="left:1164px;width:100px">10,000</div>
<div class="c" style="left:1264px;width:100px"></div>
<div class="c" style="left:1364px;width:100px"></div>
<div class="c" style="left:1464px;width:122px"></div>
</div>
<div class="abs" style="left:210px;top:657px;width:4px;height:31px;background:#ececec;border-radius:2px 0 0 2px"></div><div class="abs" style="left:210px;top:669px;width:0;height:0;border-top:3px solid transparent;border-bottom:3px solid transparent;border-right:3px solid #222"></div>
<div class="abs" style="left:1px;top:54px;width:1px;height:736px;background:#c6d8f0"></div>
<div class="menu" style="left:403px;top:366px;width:207px;height:398px"></div>
<div class="abs" style="left:430px;top:367px;width:1px;height:396px;background:#e0e0e0"></div><div class="abs" style="left:431px;top:367px;width:1px;height:396px;background:#fff"></div>
<div class="abs" style="left:406px;top:471px;width:201px;height:1px;background:#e0e0e0"></div><div class="abs" style="left:406px;top:472px;width:201px;height:1px;background:#fff"></div>
<div class="abs" style="left:406px;top:502px;width:201px;height:1px;background:#e0e0e0"></div><div class="abs" style="left:406px;top:503px;width:201px;height:1px;background:#fff"></div>
<div class="abs" style="left:406px;top:558px;width:201px;height:1px;background:#e0e0e0"></div><div class="abs" style="left:406px;top:559px;width:201px;height:1px;background:#fff"></div>
<div class="abs" style="left:406px;top:589px;width:201px;height:1px;background:#e0e0e0"></div><div class="abs" style="left:406px;top:590px;width:201px;height:1px;background:#fff"></div>
<div class="abs" style="left:406px;top:620px;width:201px;height:1px;background:#e0e0e0"></div><div class="abs" style="left:406px;top:621px;width:201px;height:1px;background:#fff"></div>
<div class="abs" style="left:406px;top:702px;width:201px;height:1px;background:#e0e0e0"></div><div class="abs" style="left:406px;top:703px;width:201px;height:1px;background:#fff"></div>
<div class="abs" style="left:406px;top:733px;width:201px;height:1px;background:#e0e0e0"></div><div class="abs" style="left:406px;top:734px;width:201px;height:1px;background:#fff"></div>
<div class="abs" style="left:406px;top:506px;width:201px;height:25px;border:1px solid #9cc1ee;border-radius:3px;background:linear-gradient(#e4eefb,#c9dcf5)"></div>
<div class="mt" style="left:437px;top:376px;">Добавить...</div>
<div class="mt" style="right:1095px;top:376px;text-align:right">Ins</div>
<div class="mt" style="left:437px;top:401px;">Размножить...</div>
<div class="mt" style="right:1095px;top:401px;text-align:right">Ctrl+F3</div>
<div class="mt" style="left:437px;top:426px;font-weight:bold;letter-spacing:0.25px;">Исправить...</div>
<div class="mt" style="right:1095px;top:426px;font-weight:bold;letter-spacing:0.25px;text-align:right">F2</div>
<div class="mt" style="left:437px;top:451px;">Удалить</div>
<div class="mt" style="right:1095px;top:451px;text-align:right">Del</div>
<div class="mt" style="left:437px;top:482px;">Обновить</div>
<div class="mt" style="right:1095px;top:482px;text-align:right">F5</div>
<div class="mt" style="left:437px;top:513px;">Состояние</div>
<div class="sub" style="left:593.5px;top:513px"></div>
<div class="mt" style="left:437px;top:538px;">Формирование</div>
<div class="sub" style="left:593.5px;top:538px"></div>
<div class="mt" style="left:437px;top:569px;">Просмотр</div>
<div class="sub" style="left:593.5px;top:569px"></div>
<div class="mt" style="left:437px;top:600px;">ЦИТК. Указать шифр затрат...</div>
<div class="mt" style="left:437px;top:631px;">Расширения</div>
<div class="sub" style="left:593.5px;top:631px"></div>
<div class="mt" style="left:437px;top:656px;">Связи</div>
<div class="sub" style="left:593.5px;top:656px"></div>
<div class="mt" style="left:437px;top:681px;">Обмен</div>
<div class="sub" style="left:593.5px;top:681px"></div>
<div class="mt" style="left:437px;top:712px;">Панель инструментов</div>
<div class="mt" style="left:437px;top:742px;">Настройки...</div>
<div class="mt" style="right:1095px;top:742px;text-align:right">Alt+Enter</div>
<svg width="0" height="0" style="position:absolute"><defs><linearGradient id="dg" x1="0" y1="0" x2="1" y2="1"><stop offset="0" stop-color="#fbfdfd"/><stop offset="1" stop-color="#dcecec"/></linearGradient></defs></svg>
<svg class="abs" style="left:409px;top:374px" width="16" height="16" viewBox="0 0 16 16"><path d="M2.5 0.5h7l3.5 3.5v11.5h-10.5z" fill="url(#dg)" stroke="#9fb0b0"/><path d="M9.5 0.5v3.5h3.5" fill="#fff" stroke="#9fb0b0"/></svg>
<svg class="abs" style="left:409px;top:399px" width="16" height="16" viewBox="0 0 16 16"><path d="M2.5 0.5h7l3.5 3.5v11.5h-10.5z" fill="url(#dg)" stroke="#9fb0b0"/><path d="M9.5 0.5v3.5h3.5" fill="#fff" stroke="#9fb0b0"/><rect x="9" y="9.5" width="6" height="2" fill="#2ea52e"/><rect x="11" y="7.5" width="2" height="6" fill="#2ea52e"/></svg>
<svg class="abs" style="left:408px;top:422px" width="18" height="18" viewBox="0 0 18 18"><path d="M5.5 1.5h6l3 3v12h-9z" fill="url(#dg)" stroke="#8fa3a3"/><rect x="1.5" y="6.5" width="10" height="5" fill="#fff" stroke="#8a8a8a"/><rect x="3" y="8" width="5.5" height="2" fill="#1f4fd0"/><path d="M8 4.5h3M9.5 4.5v8.5M8 13h3" stroke="#555" stroke-width="0.9"/></svg>
<svg class="abs" style="left:409px;top:449px" width="16" height="16" viewBox="0 0 16 16"><path d="M2.5 0.5h7l3.5 3.5v11.5h-10.5z" fill="url(#dg)" stroke="#9fb0b0"/><path d="M9.5 0.5v3.5h3.5" fill="#fff" stroke="#9fb0b0"/><rect x="8.5" y="10" width="6.5" height="2" fill="#d9262b"/></svg>
<svg class="abs" style="left:405px;top:476px" width="24" height="24" viewBox="0 0 24 24"><path d="M17.3 9.6 A5.6 5.6 0 0 0 7.8 8.6" fill="none" stroke="#62cf4e" stroke-width="2.6"/><path d="M5.3 5L4 11.8L10.9 10.6Z" fill="#72dc5c"/><path d="M6.6 13.4 A5.6 5.6 0 0 0 16.4 13.2" fill="none" stroke="#46b83a" stroke-width="2.6"/><path d="M19.9 10L18.6 16.8L13.2 11.3Z" fill="#2f9e2f"/></svg>
<svg class="abs" style="left:409px;top:629px" width="16" height="16" viewBox="0 0 16 16"><path d="M2.5 0.5h7l3.5 3.5v11.5h-10.5z" fill="url(#dg)" stroke="#9fb0b0"/><path d="M9.5 0.5v3.5h3.5" fill="#fff" stroke="#9fb0b0"/><g transform="translate(10.5 11)"><circle r="2.9" fill="none" stroke="#8c8c8c" stroke-width="1.6"/><circle r="4.2" fill="none" stroke="#8c8c8c" stroke-width="1.6" stroke-dasharray="1.3 1.3"/><circle r="1" fill="#f0f0f0"/></g></svg>
<svg class="abs" style="left:409px;top:654px" width="16" height="16" viewBox="0 0 16 16"><path d="M2.5 0.5h7l3.5 3.5v11.5h-10.5z" fill="url(#dg)" stroke="#9fb0b0"/><path d="M9.5 0.5v3.5h3.5" fill="#fff" stroke="#9fb0b0"/><rect x="2.5" y="9" width="6" height="4.2" rx="2.1" fill="none" stroke="#6a6a6a" stroke-width="1.5"/><rect x="7.5" y="9" width="6" height="4.2" rx="2.1" fill="none" stroke="#6a6a6a" stroke-width="1.5"/><path d="M5.5 11.1h5" stroke="#6a6a6a" stroke-width="1.3"/></svg>
<svg class="abs" style="left:409px;top:678px" width="17" height="17" viewBox="0 0 17 17"><path d="M0.5 2.5h6l2 2v9h-8z" fill="#e8f0fa" stroke="#6f8fc0"/><path d="M6.5 0.5h6l2.5 2.5v12h-8.5z" fill="#f2f6fc" stroke="#6f8fc0"/><path d="M3.5 15V9" stroke="#2fa82f" stroke-width="2"/><path d="M0.5 10L3.5 6L6.5 10Z" fill="#2fa82f"/><path d="M11.5 2v6" stroke="#2fa82f" stroke-width="2"/><path d="M8.5 7L11.5 11L14.5 7Z" fill="#2fa82f"/></svg>
<div class="cb" style="left:410px;top:711px;width:13px;height:13px;border-color:#8a8a8a"></div>
<svg class="abs" style="left:408px;top:739px" width="18" height="18" viewBox="0 0 18 18"><path d="M2.6 15.4L10 8" stroke="#6a9be0" stroke-width="4.2" stroke-linecap="round"/><path d="M3 14.6L9.6 8" stroke="#a9c9f3" stroke-width="1.2" stroke-linecap="round"/><path d="M9 9 A3.8 3.8 0 0 1 13 3.2 L11.5 5.3 L12.7 6.5 L14.8 5 A3.8 3.8 0 0 1 9 9Z" fill="#a3a3a3" stroke="#7d7d7d" stroke-width="0.9"/></svg>
<div class="menu" style="left:607px;top:506px;width:186px;height:155px"></div>
<div class="abs" style="left:635px;top:510px;width:1px;height:146px;background:#e0e0e0"></div><div class="abs" style="left:636px;top:510px;width:1px;height:146px;background:#fff"></div>
<div class="mt" style="left:641px;top:516px;">Согласовать...</div>
<div class="mt dis" style="left:641px;top:541px;">Снять согласование...</div>
<div class="mt" style="left:641px;top:567px;">Открыть...</div>
<div class="mt" style="left:641px;top:592px;">Закрыть...</div>
<div class="mt dis" style="left:641px;top:617px;">Прекратить исполнение...</div>
<div class="mt dis" style="left:641px;top:641px;">Остановить...</div>
<div class="abs" style="left:633px;top:558px;width:160px;height:31px;border:4px solid #f00;border-radius:8px"></div></body></html>
